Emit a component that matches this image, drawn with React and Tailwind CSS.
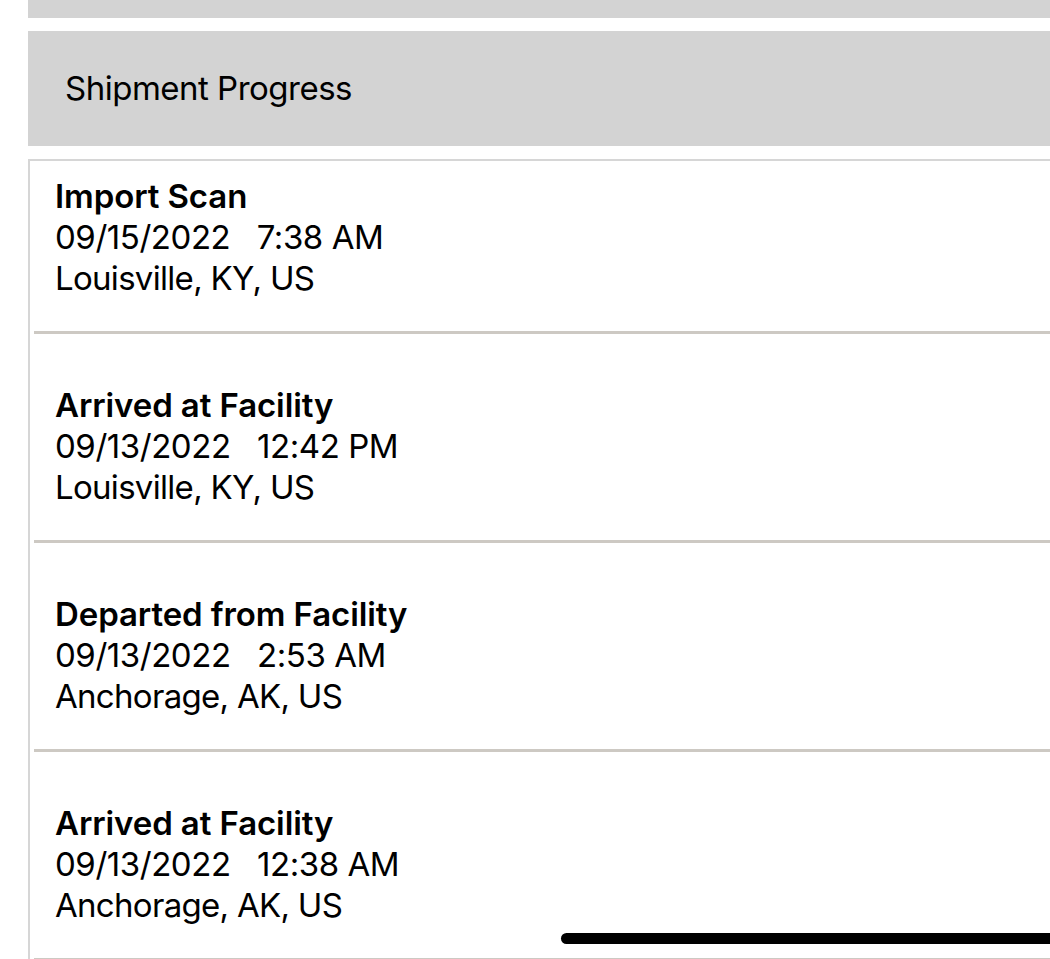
const events = [
  { title: "Import Scan", date: "09/15/2022", time: "7:38 AM", place: "Louisville, KY, US" },
  { title: "Arrived at Facility", date: "09/13/2022", time: "12:42 PM", place: "Louisville, KY, US" },
  { title: "Departed from Facility", date: "09/13/2022", time: "2:53 AM", place: "Anchorage, AK, US" },
  { title: "Arrived at Facility", date: "09/13/2022", time: "12:38 AM", place: "Anchorage, AK, US" },
];

function App() {
  return (
    <div
      className="relative w-[1050px] h-[959px] overflow-hidden bg-white pl-[28px] text-black"
      style={{ fontFamily: "Inter, 'Liberation Sans', sans-serif" }}
    >
      <div className="h-[18px] bg-[#d3d3d3]" />
      <div className="mt-[13px] h-[115px] bg-[#d3d3d3] flex items-center pl-[37px]">
        <h2 className="text-[33px] leading-none tracking-[-0.5px]">Shipment Progress</h2>
      </div>
      <div className="mt-[13px] border-l-2 border-t-2 border-[#d6d6d6]">
        {events.map((ev, i) => (
          <div
            key={i}
            className={`ml-[4px] border-b-[3px] border-[#cdc9c3] pl-[21px] pb-[32px] ${
              i === 0 ? "pt-[15px]" : "pt-[51px]"
            }`}
          >
            <div className="text-[33px] leading-[41px] font-semibold tracking-[-0.1px]">{ev.title}</div>
            <div className="text-[33px] leading-[41px] whitespace-pre tracking-[-0.45px]">
              {ev.date + "   " + ev.time}
            </div>
            <div className="text-[33px] leading-[41px] tracking-[-0.7px]">{ev.place}</div>
          </div>
        ))}
      </div>
      <div className="absolute left-[561px] top-[933px] w-[520px] h-[11px] rounded-full bg-black" />
    </div>
  );
}

export default App;
